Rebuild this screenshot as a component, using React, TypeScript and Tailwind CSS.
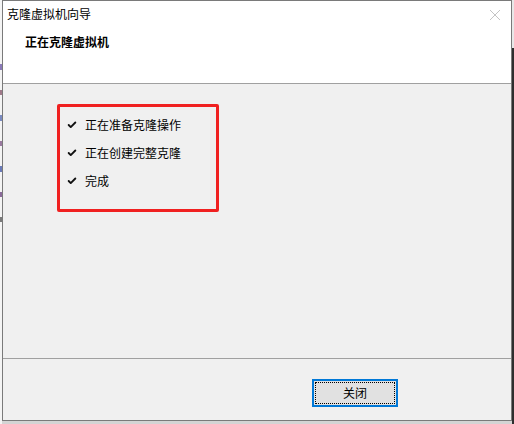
import { Check } from 'lucide-react'

const font = { fontFamily: '"Noto Sans CJK SC", "Noto Sans", sans-serif' }

const steps = ['正在准备克隆操作', '正在创建完整克隆', '完成']

export default function App() {
  return (
    <div className="w-[514px] h-[424px] flex bg-[#e6e6e6] overflow-hidden" style={font}>
      {/* sliver of window behind */}
      <div className="w-[2px] h-full bg-[#f4f4f4] flex flex-col gap-[20px] pt-[64px]">
        <div className="h-[6px] bg-[#8a7ab8]" />
        <div className="h-[5px] bg-[#a07a8a]" />
        <div className="h-[6px] bg-[#7a8ac0]" />
        <div className="h-[5px] bg-[#9a7aa0]" />
        <div className="h-[6px] bg-[#6a7ab8]" />
        <div className="h-[5px] bg-[#8a6a9a]" />
        <div className="h-[5px] bg-[#7a7a7a]" />
      </div>
      <div className="flex flex-col">
        <div className="w-[510px] h-[421px] border border-[#7a7a7a] bg-[#f0f0f0] flex flex-col text-[12px] text-black">
          {/* header */}
          <div className="h-[83px] bg-white border-b border-[#a0a0a0] flex flex-col">
            <div className="flex items-center justify-between h-[25px] pl-[4px] pr-[10px]">
              <span className="text-[12px] leading-none">克隆虚拟机向导</span>
              <svg width="12" height="12" viewBox="0 0 12 12" className="mt-[2px]">
                <path d="M1 1 L11 11 M11 1 L1 11" stroke="#c4c4c4" strokeWidth="1" />
              </svg>
            </div>
            <div className="pl-[22px] pt-[10px] font-bold text-[12px] leading-none">正在克隆虚拟机</div>
          </div>
          {/* body */}
          <div className="flex-1 pl-[54px] pt-[20px]">
            <div className="w-[162px] h-[108px] border-[3px] border-[#f02020] rounded-[2px] flex flex-col gap-[12px] pl-[7px] pt-[10px]">
              {steps.map((s) => (
                <div key={s} className="flex items-center gap-[8px] h-[16px]">
                  <Check size={10} strokeWidth={4.5} className="text-[#111]" />
                  <span className="leading-none">{s}</span>
                </div>
              ))}
            </div>
          </div>
          {/* footer */}
          <div className="h-[62px] border-t border-[#a0a0a0] flex justify-end pr-[113px] pt-[20px]">
            <button className="w-[86px] h-[28px] border-2 border-[#0078d7] bg-[#e1e1e1] p-[1px]">
              <div className="w-full h-full border border-dotted border-black flex items-center justify-center text-[12px] leading-none">
                关闭
              </div>
            </button>
          </div>
        </div>
        <div className="h-[3px] bg-[#d4d4d4]" />
      </div>
      <div className="flex-1 flex flex-col">
        <div className="h-[48px] bg-[#e8e8e8]" />
        <div className="flex-1 bg-[#2e2e2e]" />
      </div>
    </div>
  )
}
